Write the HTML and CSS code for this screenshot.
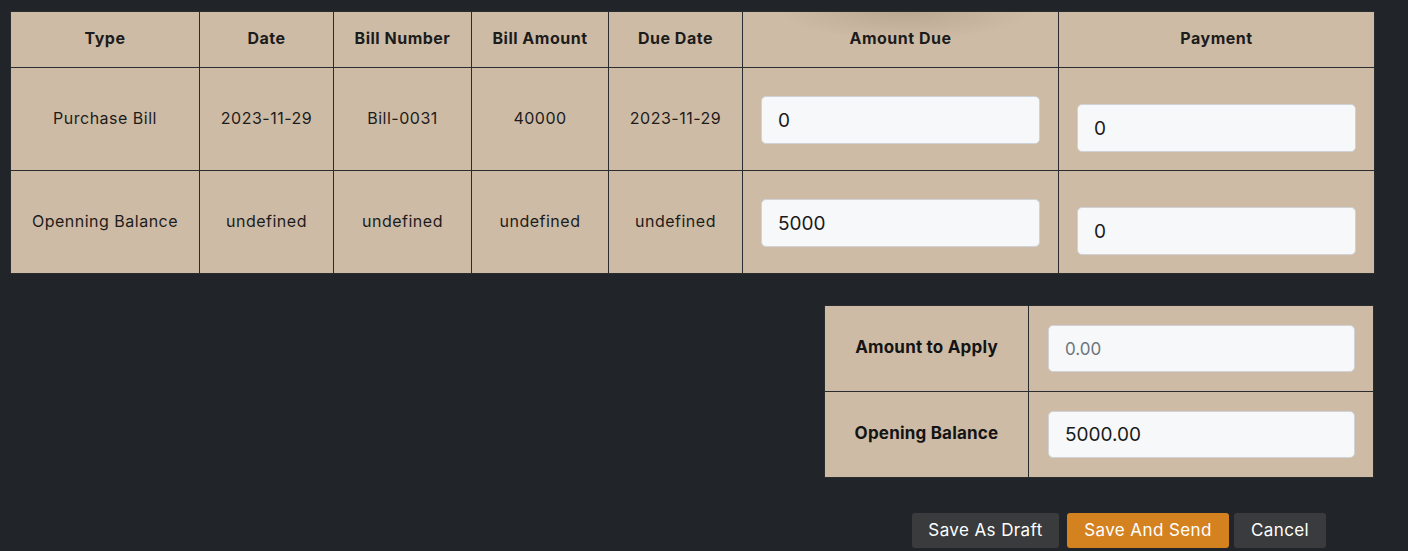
FILE: index.html
```html
<!DOCTYPE html>
<html>
<head>
<meta charset="utf-8">
<link rel="stylesheet" href="styles.css">
</head>
<body>
<div class="page">
  <div class="top-shadow"></div>
  <table class="bills">
    <colgroup>
      <col class="c-type"><col class="c-date"><col class="c-num"><col class="c-amt"><col class="c-due"><col class="c-wide"><col class="c-wide">
    </colgroup>
    <thead>
      <tr>
        <th>Type</th><th>Date</th><th>Bill Number</th><th>Bill Amount</th><th>Due Date</th><th>Amount Due</th><th>Payment</th>
      </tr>
    </thead>
    <tbody>
      <tr>
        <td>Purchase Bill</td><td>2023-11-29</td><td>Bill-0031</td><td>40000</td><td>2023-11-29</td>
        <td class="in-cell"><input class="field" type="text" value="0"></td>
        <td class="in-cell"><input class="field field-pay" type="text" value="0"></td>
      </tr>
      <tr>
        <td>Openning Balance</td><td>undefined</td><td>undefined</td><td>undefined</td><td>undefined</td>
        <td class="in-cell"><input class="field" type="text" value="5000"></td>
        <td class="in-cell"><input class="field field-pay" type="text" value="0"></td>
      </tr>
    </tbody>
  </table>

  <div class="summary-wrap">
    <table class="summary">
      <colgroup><col class="s-label"><col class="s-input"></colgroup>
      <tr>
        <th>Amount to Apply</th>
        <td><input class="field" type="text" placeholder="0.00"></td>
      </tr>
      <tr>
        <th>Opening Balance</th>
        <td><input class="field" type="text" value="5000.00"></td>
      </tr>
    </table>
  </div>

  <div class="actions">
    <button class="btn btn-dark btn-draft">Save As Draft</button>
    <button class="btn btn-orange btn-send">Save And Send</button>
    <button class="btn btn-dark btn-cancel">Cancel</button>
  </div>
</div>
</body>
</html>
```

FILE: styles.css
```css
html, body {
  margin: 0;
  padding: 0;
  background: #212429;
  font-family: "Inter", "Noto Sans", sans-serif;
  color: #1c1c1c;
}

.page {
  position: relative;
  padding: 11px 34px 0 10px;
}

.top-shadow {
  position: absolute;
  top: 12px;
  left: 780px;
  width: 250px;
  height: 40px;
  background: radial-gradient(ellipse 50% 70% at 50% 0%, rgba(60, 40, 20, 0.13), rgba(60, 40, 20, 0) 100%);
  pointer-events: none;
  z-index: 2;
}

table {
  border-collapse: collapse;
  background: #cebba5;
}

.bills {
  width: 1364px;
  table-layout: fixed;
}

.c-type { width: 189px; }
.c-date { width: 134px; }
.c-num { width: 138px; }
.c-amt { width: 137px; }
.c-due { width: 134px; }
.c-wide { width: 316px; }

.bills th,
.bills td {
  border: 1px solid #2b2c2f;
  text-align: center;
  vertical-align: middle;
  font-size: 16px;
}

.bills th {
  height: 52px;
  padding: 0 6px 3px;
  font-weight: 700;
  letter-spacing: 0.5px;
}

.bills td {
  padding: 18px 6px 20px;
  font-weight: 400;
  letter-spacing: 0.5px;
}

.bills td.in-cell {
  padding: 20px 18px 18px;
}

.field {
  display: block;
  box-sizing: border-box;
  width: 100%;
  height: 48px;
  margin: 0;
  padding: 0 16px;
  border: 1px solid #cfd3d8;
  border-radius: 5px;
  background: #f7f8fa;
  font-family: "Inter", "Noto Sans", sans-serif;
  font-size: 19px;
  color: #1a1a1a;
  outline: none;
}

.field::placeholder {
  color: #6c757d;
  font-size: 17px;
}

.field-pay {
  margin-top: 16px;
}

.summary-wrap {
  display: flex;
  justify-content: flex-end;
  margin-top: 31px;
}

.summary {
  width: 549px;
  table-layout: fixed;
}

.s-label { width: 204px; }
.s-input { width: 345px; }

.summary th,
.summary td {
  border: 1px solid #2b2c2f;
  vertical-align: middle;
}

.summary th {
  height: 82px;
  padding: 0 6px 3px;
  font-size: 17px;
  font-weight: 700;
  text-align: center;
  letter-spacing: 0.2px;
  color: #141414;
}

.summary td {
  padding: 18px 18px 18px 19px;
}

.summary .field {
  height: 47px;
}

.actions {
  display: flex;
  justify-content: flex-end;
  margin-top: 35px;
  padding-right: 48px;
}

.btn {
  height: 35px;
  padding: 0 0 2px;
  border: none;
  border-radius: 3px;
  font-family: "Inter", "Noto Sans", sans-serif;
  font-size: 17px;
  letter-spacing: 0.4px;
  color: #ffffff;
  cursor: pointer;
}

.btn-draft { width: 147px; }
.btn-send { width: 162px; margin-left: 8px; }
.btn-cancel { width: 92px; margin-left: 5px; }

.btn-dark {
  background: #3a3b3d;
}

.btn-orange {
  background: #d4821f;
}
```
